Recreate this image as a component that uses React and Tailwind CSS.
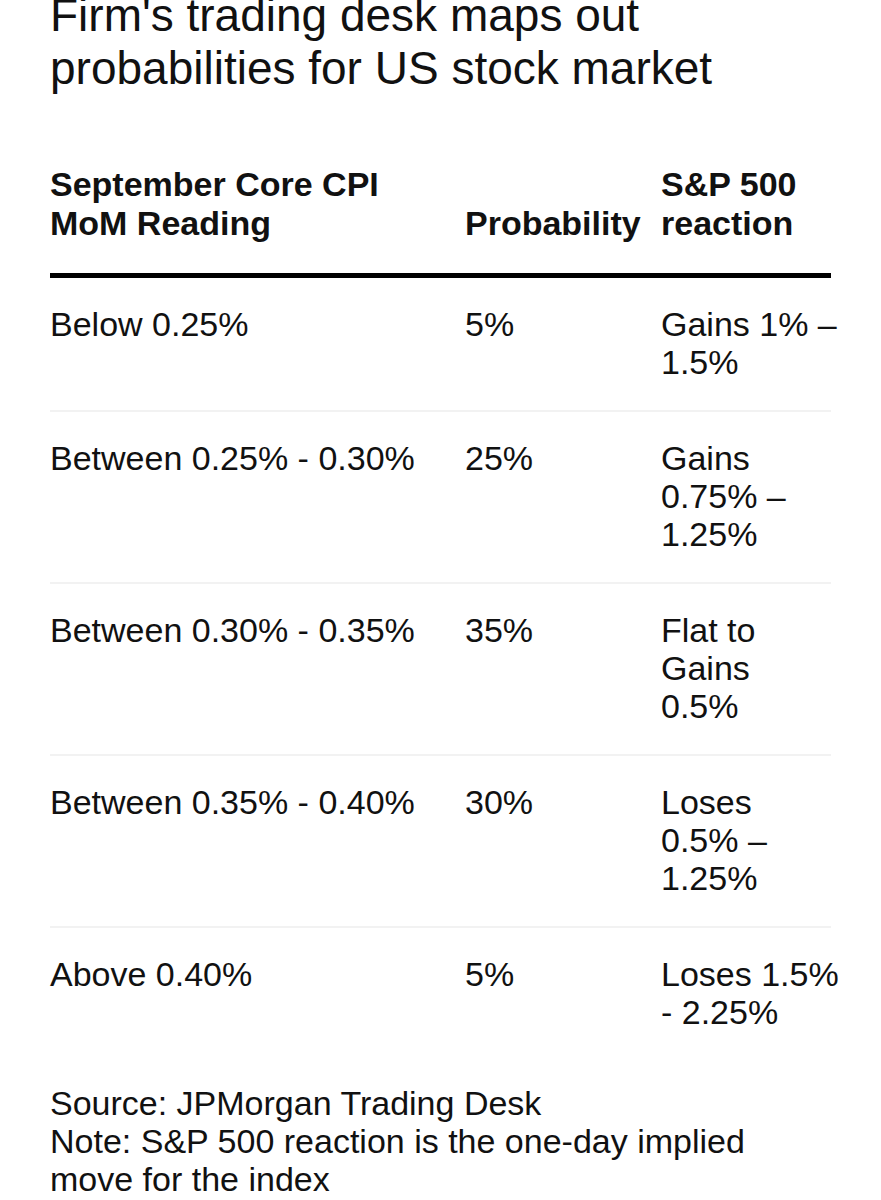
const rows = [
  { reading: 'Below 0.25%', prob: '5%', reaction: ['Gains 1% –', '1.5%'] },
  { reading: 'Between 0.25% - 0.30%', prob: '25%', reaction: ['Gains', '0.75% –', '1.25%'] },
  { reading: 'Between 0.30% - 0.35%', prob: '35%', reaction: ['Flat to', 'Gains', '0.5%'] },
  { reading: 'Between 0.35% - 0.40%', prob: '30%', reaction: ['Loses', '0.5% –', '1.25%'] },
  { reading: 'Above 0.40%', prob: '5%', reaction: ['Loses 1.5%', '- 2.25%'] },
];

const cols = 'grid grid-cols-[415px_196px_170px]';

export default function App() {
  return (
    <div className="min-h-[1200px] w-[881px] overflow-hidden bg-white text-[#111] font-['Liberation_Sans',Arial,sans-serif]">
      <div className="pl-[50px]">
        <h1 className="mt-[-11px] text-[46px] leading-[53px] font-normal">
          Firm's trading desk maps out
          <br />
          probabilities for US stock market
        </h1>

        <div className="mt-[70px] w-[781px]">
          <div className={`${cols} items-end border-b-[5px] border-black pb-[30px] text-[34px] leading-[39px] font-bold`}>
            <div>
              September Core CPI
              <br />
              MoM Reading
            </div>
            <div className="whitespace-nowrap">Probability</div>
            <div className="whitespace-nowrap">
              S&amp;P 500
              <br />
              reaction
            </div>
          </div>

          {rows.map((r, i) => (
            <div
              key={r.reading}
              className={`${cols} pt-[27px] pb-[29px] text-[34px] leading-[38px] ${
                i < rows.length - 1 ? 'border-b-2 border-[#f2f2f2]' : ''
              }`}
            >
              <div className="whitespace-nowrap">{r.reading}</div>
              <div>{r.prob}</div>
              <div className="whitespace-nowrap">
                {r.reaction.map((line) => (
                  <div key={line}>{line}</div>
                ))}
              </div>
            </div>
          ))}
        </div>

        <div className="mt-[24px] text-[34px] leading-[38px]">
          <p>Source: JPMorgan Trading Desk</p>
          <p>Note: S&amp;P 500 reaction is the one-day implied</p>
          <p>move for the index</p>
        </div>
      </div>
    </div>
  );
}
